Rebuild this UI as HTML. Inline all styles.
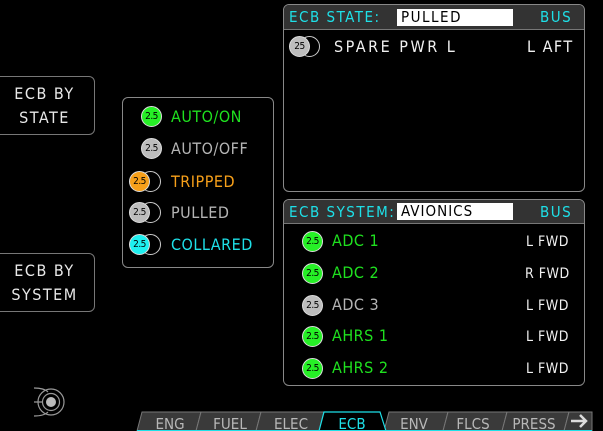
<!DOCTYPE html>
<html><head><meta charset="utf-8"><style>
body{margin:0;width:603px;height:431px;background:#000;overflow:hidden;position:relative;font-family:"DejaVu Sans Condensed","Liberation Sans",sans-serif}
.a{position:absolute}
.btn{position:absolute;left:-6px;width:101px;height:59px;border:1px solid #777;border-radius:6px;color:#e8e8e8;font-size:16px;letter-spacing:1.5px;text-align:center;line-height:24px;padding-top:5px;box-sizing:border-box}
.panel{position:absolute;left:283px;width:302px;border:1px solid #888;border-radius:6px;box-sizing:border-box;overflow:hidden}
.hdr{height:23px;background:#333;border-bottom:1px solid #777;position:relative;color:#1ee0e8;font-size:15px;letter-spacing:1.5px}
.fld{position:absolute;left:113px;top:3px;width:116px;height:17px;background:#fff;color:#000;font-size:15px;line-height:17px;padding-left:4px;box-sizing:border-box}
.t{position:absolute;font-size:16px;letter-spacing:.5px;line-height:18px;white-space:nowrap}
.c{position:absolute;width:21px;height:21px;border-radius:50%;color:#000;font-size:10px;line-height:19px;text-align:center;letter-spacing:-.5px;border:1px solid #ddd;box-sizing:border-box}
.o{position:absolute;width:21px;height:21px;border-radius:50%;border:1px solid #ccc;box-sizing:border-box}
.g{color:#1fe01f}.gy{color:#b4b4b4}.w{color:#f0f0f0}
.b{font-size:14px}
</style></head><body>
<div class="btn" style="top:76px">ECB BY<br>STATE</div>
<div class="btn" style="top:253px">ECB BY<br>SYSTEM</div>

<div class="a" style="left:122px;top:97px;width:152px;height:171px;border:1px solid #888;border-radius:6px;box-sizing:border-box"></div>
<div class="c" style="left:141px;top:106px;background:#26f026">2.5</div><div class="t g" style="left:171px;top:108px">AUTO/ON</div>
<div class="c" style="left:141px;top:138px;background:#bdbdbd">2.5</div><div class="t gy" style="left:171px;top:140px">AUTO/OFF</div>
<div class="o" style="left:140px;top:171px"></div><div class="c" style="left:129px;top:171px;background:#f7a01a">2.5</div><div class="t" style="left:171px;top:173px;color:#f7a01a">TRIPPED</div>
<div class="o" style="left:140px;top:202px"></div><div class="c" style="left:129px;top:202px;background:#bdbdbd">2.5</div><div class="t gy" style="left:171px;top:204px">PULLED</div>
<div class="o" style="left:140px;top:234px"></div><div class="c" style="left:129px;top:234px;background:#1ef0f0">2.5</div><div class="t" style="left:171px;top:236px;color:#1ee0e8">COLLARED</div>

<div class="panel" style="top:4px;height:188px">
<div class="hdr" style="height:24px"><span class="a" style="left:5px;top:3px">ECB STATE:</span><div class="fld" style="top:4px">PULLED</div><span class="a" style="left:256px;top:3px">BUS</span></div>
<div class="o" style="left:15px;top:31px"></div><div class="c" style="left:5px;top:31px;background:#bdbdbd">25</div>
<div class="t w" style="left:50px;top:33px;letter-spacing:2.5px">SPARE PWR L</div>
<div class="t w" style="left:243px;top:33px;letter-spacing:1.5px">L AFT</div>
</div>

<div class="panel" style="top:199px;height:187px">
<div class="hdr"><span class="a" style="left:5px;top:3px">ECB SYSTEM:</span><div class="fld" style="top:3px;letter-spacing:1px">AVIONICS</div><span class="a" style="left:256px;top:3px">BUS</span></div>
<div class="c" style="left:18px;top:31px;background:#26f026">2.5</div><div class="t g" style="left:48px;top:32px">ADC 1</div><div class="t w b" style="left:242px;top:33px">L FWD</div>
<div class="c" style="left:18px;top:63px;background:#26f026">2.5</div><div class="t g" style="left:48px;top:64px">ADC 2</div><div class="t w b" style="left:241px;top:65px">R FWD</div>
<div class="c" style="left:18px;top:95px;background:#bdbdbd">2.5</div><div class="t gy" style="left:48px;top:96px">ADC 3</div><div class="t w b" style="left:242px;top:97px">L FWD</div>
<div class="c" style="left:18px;top:126px;background:#26f026">2.5</div><div class="t g" style="left:48px;top:127px">AHRS 1</div><div class="t w b" style="left:242px;top:128px">L FWD</div>
<div class="c" style="left:18px;top:158px;background:#26f026">2.5</div><div class="t g" style="left:48px;top:159px">AHRS 2</div><div class="t w b" style="left:242px;top:160px">L FWD</div>
</div>

<svg class="a" style="left:0;top:0" width="603" height="431">
<g stroke="#999" stroke-width="1.2" fill="none">
<circle cx="51" cy="402" r="13"/><circle cx="51" cy="402" r="8.5"/>
<path d="M34 388 Q44 388 48 392 M34 402 H43 M34 416 Q44 416 48 412"/>
</g>
<circle cx="51" cy="402" r="5" fill="#bbb"/>
<g stroke="#777" stroke-width="1" fill="#3a3a3a">
<path d="M137 431 L142 412 H201 L196 431Z"/>
<path d="M196 431 L201 412 H261 L256 431Z"/>
<path d="M256 431 L261 412 H324 L319 431Z"/>
<path d="M384 431 L389 412 H448 L443 431Z"/>
<path d="M443 431 L448 412 H507 L502 431Z"/>
<path d="M502 431 L507 412 H569 L564 431Z"/>
<path d="M564 431 L569 412 H592 V431Z"/>
</g>
<path d="M319 431 L324 412 H380 L386 431" fill="#000" stroke="#1ee0e8" stroke-width="1.2"/>
<line x1="137" y1="430.5" x2="592" y2="430.5" stroke="#1ee0e8" stroke-width="1"/>
<g font-family="DejaVu Sans Condensed, Liberation Sans, sans-serif" font-size="15" fill="#b8b8b8" text-anchor="middle">
<text x="170" y="429">ENG</text><text x="230" y="429">FUEL</text><text x="291" y="429">ELEC</text>
<text x="352" y="429" fill="#1ee0e8">ECB</text><text x="414" y="429">ENV</text><text x="473" y="429">FLCS</text><text x="534" y="429">PRESS</text>
</g>
<path d="M571 421 H586 M580 415 L586 421 L580 427" stroke="#ddd" stroke-width="2.5" fill="none"/>
</svg>
</body></html>
